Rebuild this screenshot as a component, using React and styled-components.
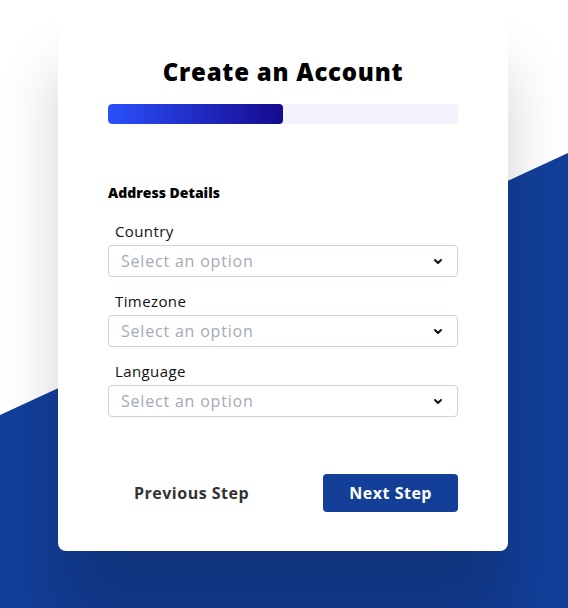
import React from "react";
import styled, { createGlobalStyle } from "styled-components";

const Global = createGlobalStyle`
  html, body { margin: 0; padding: 0; background: #ffffff; }
  body { font-family: "Open Sans", "DejaVu Sans", sans-serif; }
  * { box-sizing: border-box; }
`;

const Page = styled.div`
  position: relative;
  min-height: 608px;
  overflow: hidden;
  display: flex;
  justify-content: center;
  align-items: flex-start;
  padding: 0 2px 0 0;
  &::before {
    content: "";
    position: absolute;
    inset: 0;
    background: #133f99;
    clip-path: polygon(0 415px, 100% 153px, 100% 100%, 0 100%);
  }
`;

const Card = styled.div`
  position: relative;
  width: 450px;
  background: #ffffff;
  border-radius: 0 0 8px 8px;
  box-shadow: 0 70px 60px rgba(0, 0, 0, 0.18);
  padding: 57px 50px 39px;
  display: flex;
  flex-direction: column;
`;

const Title = styled.h1`
  margin: 0;
  font-size: 24px;
  line-height: 30px;
  font-weight: 800;
  letter-spacing: 0.75px;
  text-align: center;
  color: #000;
`;

const Track = styled.div`
  margin-top: 17px;
  height: 20px;
  border-radius: 4px;
  background: #f4f3fd;
  overflow: hidden;
`;

const Fill = styled.div`
  height: 100%;
  border-radius: 4px;
  background: linear-gradient(90deg, #2a50fb 0%, #150a8e 100%);
`;

const Section = styled.h2`
  margin: 59px 0 0;
  font-size: 14px;
  line-height: 20px;
  font-weight: 800;
  color: #000;
`;

const Field = styled.div`
  display: flex;
  flex-direction: column;
  margin-top: ${(p) => p.$top}px;
`;

const Label = styled.label`
  padding-left: 7px;
  font-size: 15px;
  line-height: 20px;
  font-weight: 500;
  letter-spacing: 0.4px;
  color: #111;
`;

const SelectBox = styled.div`
  margin-top: 4px;
  height: 32px;
  border: 1px solid #cdd1d8;
  border-radius: 4px;
  display: flex;
  align-items: center;
  justify-content: space-between;
  padding: 0 14px 0 12px;
  font-size: 16px;
  letter-spacing: 0.8px;
  color: #a3aab5;
`;

const Chevron = () => (
  <svg width="10" height="7" viewBox="0 0 10 7">
    <path d="M2 2 L5 5 L8 2" fill="none" stroke="#111" strokeWidth="2" strokeLinecap="round" strokeLinejoin="round" />
  </svg>
);

const Actions = styled.div`
  margin-top: 57px;
  display: flex;
  justify-content: space-between;
  align-items: center;
`;

const Button = styled.button`
  height: 38px;
  padding: 0 26px;
  border: none;
  border-radius: 4px;
  font-family: inherit;
  font-size: 16px;
  font-weight: 700;
  letter-spacing: 0.5px;
  cursor: pointer;
  background: ${(p) => (p.$primary ? "#133f99" : "transparent")};
  color: ${(p) => (p.$primary ? "#ffffff" : "#333333")};
`;

const fields = [
  { label: "Country", top: 18 },
  { label: "Timezone", top: 14 },
  { label: "Language", top: 14 },
];

export default function App() {
  return (
    <>
      <Global />
      <Page>
        <Card>
          <Title>Create an Account</Title>
          <Track>
            <Fill style={{ width: "50%" }} />
          </Track>
          <Section>Address Details</Section>
          {fields.map((f) => (
            <Field key={f.label} $top={f.top}>
              <Label>{f.label}</Label>
              <SelectBox>
                <span>Select an option</span>
                <Chevron />
              </SelectBox>
            </Field>
          ))}
          <Actions>
            <Button>Previous Step</Button>
            <Button $primary>Next Step</Button>
          </Actions>
        </Card>
      </Page>
    </>
  );
}
